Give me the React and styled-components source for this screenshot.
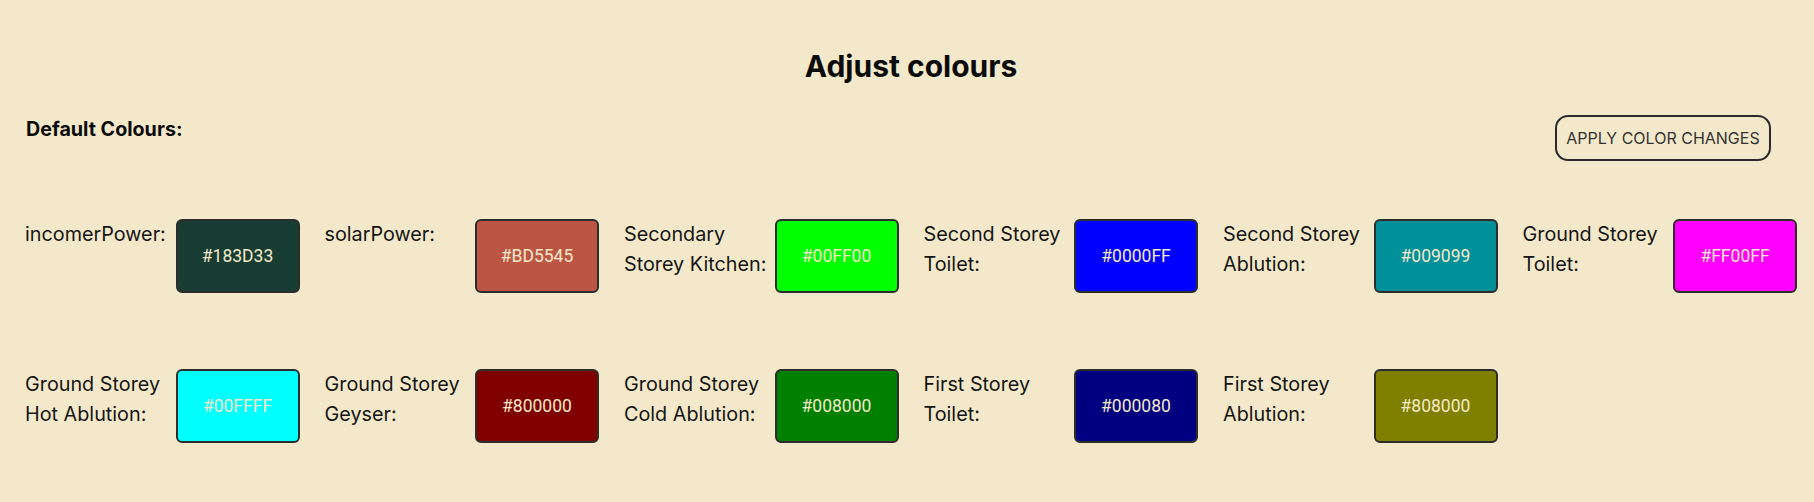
import React from "react";
import styled, { createGlobalStyle } from "styled-components";

const Global = createGlobalStyle`
  html, body {
    margin: 0;
    padding: 0;
    background: #f3e9ca;
  }
  body {
    font-family: Inter, "Noto Sans", sans-serif;
    color: #111111;
  }
`;

const Page = styled.div`
  padding: 48px 17px 40px 25px;
  box-sizing: border-box;
  width: 1814px;
  min-height: 502px;
  background: #f3e9ca;
`;

const Title = styled.h2`
  margin: 0;
  text-align: center;
  font-family: Inter, sans-serif;
  font-weight: 700;
  font-size: 30px;
  line-height: 36px;
  color: #0b0b0b;
`;

const HeaderRow = styled.div`
  margin-top: 31px;
  display: flex;
  justify-content: space-between;
  align-items: flex-start;
`;

const SubTitle = styled.h3`
  margin: 2px 0 0 1px;
  font-family: Inter, sans-serif;
  font-weight: 700;
  font-size: 19.7px;
  line-height: 24px;
  color: #0b0b0b;
`;

const ApplyButton = styled.button`
  margin-right: 26px;
  width: 216px;
  height: 46px;
  box-sizing: border-box;
  border: 2px solid #2a2a2a;
  border-radius: 13px;
  background: transparent;
  font-family: Inter, sans-serif;
  font-size: 16px;
  color: #333333;
  cursor: pointer;
  padding: 0;
`;

const Grid = styled.div`
  margin-top: 58px;
  display: grid;
  grid-template-columns: repeat(6, 1fr);
  column-gap: 25px;
  row-gap: 76px;
`;

const Item = styled.div`
  display: flex;
  align-items: flex-start;
  gap: 4px;
`;

const Label = styled.div`
  flex: 1;
  font-family: Inter, sans-serif;
  font-size: 19.8px;
  line-height: 30px;
  color: #151515;
`;

const Swatch = styled.div`
  flex-shrink: 0;
  width: 124px;
  height: 74px;
  box-sizing: border-box;
  border: 2px solid #2c2c2c;
  border-radius: 6px;
  background: ${(p) => p.$color};
  display: flex;
  align-items: center;
  justify-content: center;
  font-family: Roboto, sans-serif;
  font-size: 17.5px;
  color: #f3e9ca;
`;

const colours = [
  ["incomerPower:", "#183D33"],
  ["solarPower:", "#BD5545"],
  ["Secondary Storey Kitchen:", "#00FF00"],
  ["Second Storey Toilet:", "#0000FF"],
  ["Second Storey Ablution:", "#009099"],
  ["Ground Storey Toilet:", "#FF00FF"],
  ["Ground Storey Hot Ablution:", "#00FFFF"],
  ["Ground Storey Geyser:", "#800000"],
  ["Ground Storey Cold Ablution:", "#008000"],
  ["First Storey Toilet:", "#000080"],
  ["First Storey Ablution:", "#808000"],
];

export default function App() {
  return (
    <Page>
      <Global />
      <Title>Adjust colours</Title>
      <HeaderRow>
        <SubTitle>Default Colours:</SubTitle>
        <ApplyButton>APPLY COLOR CHANGES</ApplyButton>
      </HeaderRow>
      <Grid>
        {colours.map(([label, color]) => (
          <Item key={label}>
            <Label>{label}</Label>
            <Swatch $color={color}>{color}</Swatch>
          </Item>
        ))}
      </Grid>
    </Page>
  );
}
